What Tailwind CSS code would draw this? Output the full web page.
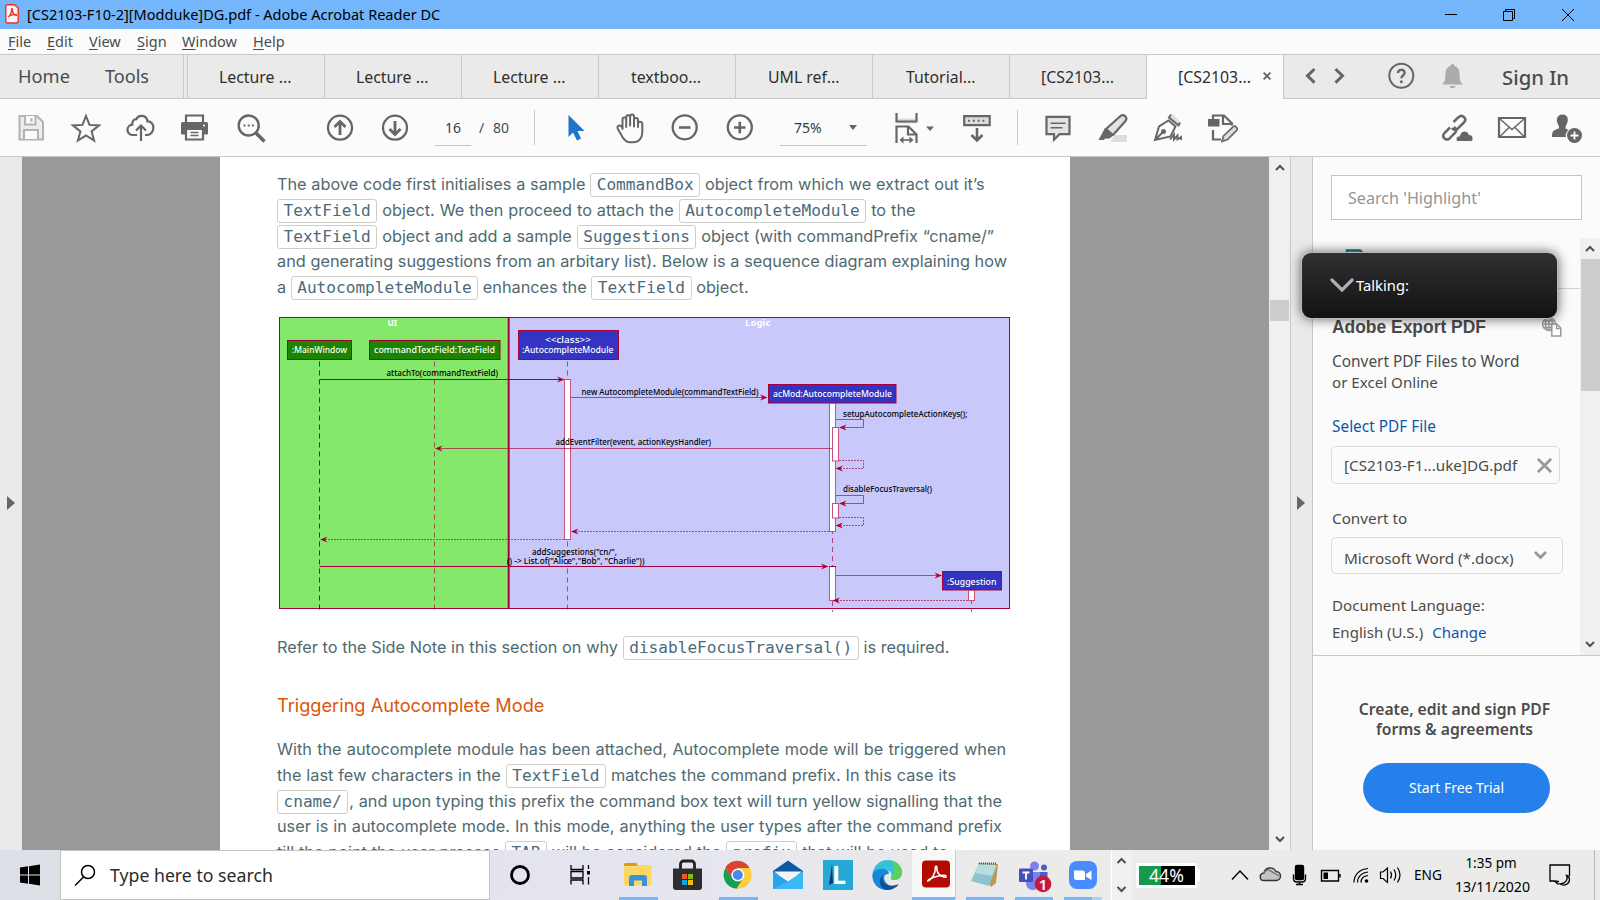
<!DOCTYPE html>
<html lang="en">
<head>
<meta charset="utf-8">
<title>[CS2103-F10-2][Modduke]DG.pdf - Adobe Acrobat Reader DC</title>
<script src="https://cdn.jsdelivr.net/npm/@tailwindcss/browser@4"></script>
</head>
<body class="w-[1600px] h-[900px] overflow-hidden flex flex-col bg-[#fbfbfb] font-['Noto_Sans','Open_Sans',sans-serif] text-[#4b4b4b] whitespace-nowrap">

<!-- Title bar -->
<header class="h-[29px] shrink-0 bg-[#73b6fc] flex items-center text-black">
  <svg class="ml-[5px] -mt-[2px] w-[14px] h-[20px]" viewBox="0 0 14 20"><path d="M2 .8h7.5L13.2 4v13a2 2 0 0 1-2 2H2.800a2 2 0 0 1-2-2V2A1.200 1.200 0 0 1 2 .8z" fill="#fff4f3" stroke="#e8322a" stroke-width="1.400"/><path d="M3 13c2-.8 3.800-4.500 3.600-7.500 0-1 1-1 .9 0C7.200 8.500 9 11 11 11.300c1 .2.800-.9-.3-.9-2.500 0-5 .7-6.900 1.700" fill="none" stroke="#e8322a" stroke-width="1.300"/></svg>
  <span class="ml-[8px] text-[14.540px] leading-[29px]">[CS2103-F10-2][Modduke]DG.pdf - Adobe Acrobat Reader DC</span>
  <svg class="ml-auto w-[12px] h-[12px]" viewBox="0 0 12 12"><path d="M0 5.500h12" stroke="#000"/></svg>
  <svg class="ml-[46px] w-[12px] h-[12px]" viewBox="0 0 12 12" fill="none" stroke="#000"><path d="M.5 2.500h9v9h-9zM2.500 2.500v-2h9v9h-2"/></svg>
  <svg class="ml-[47px] mr-[26px] w-[12px] h-[12px]" viewBox="0 0 12 12" stroke="#000"><path d="M0 0l12 12M12 0L0 12"/></svg>
</header>

<!-- Menu bar -->
<nav class="h-[25px] shrink-0 flex items-center text-[14.500px] leading-[25px] [&_u]:underline-offset-2 pl-[8px]">
  <span class="w-[39px]"><u>F</u>ile</span><span class="w-[42px]"><u>E</u>dit</span><span class="w-[48px]"><u>V</u>iew</span><span class="w-[45px]"><u>S</u>ign</span><span class="w-[71px]"><u>W</u>indow</span><span><u>H</u>elp</span>
</nav>

<!-- Tabs -->
<div class="h-[45px] shrink-0 flex bg-[#eaeaea] border-y border-[#c8c8c8] leading-[44px] text-[#2f2f2f] text-[15.850px]">
  <span class="w-[87px] pl-[18px] text-[18.300px] leading-[42px] text-[#4b4b4b]">Home</span>
  <span class="w-[97px] pl-[18px] text-[18.100px] leading-[42px] text-[#4b4b4b] border-r border-[#c8c8c8]">Tools</span>
  <span class="w-[4px] border-r border-[#c8c8c8]"></span>
  <span class="w-[137px] h-[43px] pl-[31px] border-r border-[#c8c8c8]">Lecture ...</span>
  <span class="w-[137px] h-[43px] pl-[31px] border-r border-[#c8c8c8]">Lecture ...</span>
  <span class="w-[137px] h-[43px] pl-[31px] border-r border-[#c8c8c8]">Lecture ...</span>
  <span class="w-[137px] h-[43px] pl-[32px] border-r border-[#c8c8c8]">textboo...</span>
  <span class="w-[137px] h-[43px] pl-[32px] border-r border-[#c8c8c8]">UML ref...</span>
  <span class="w-[137px] h-[43px] pl-[33px] border-r border-[#c8c8c8]">Tutorial...</span>
  <span class="w-[137px] h-[43px] pl-[31px] border-r border-[#c8c8c8]">[CS2103...</span>
  <span class="w-[137px] h-[44px] pl-[31px] border-r border-[#c8c8c8] bg-[#fbfbfb] flex items-center"><span class="w-[85px]">[CS2103...</span><svg class="-mt-[2px] w-[8px] h-[8px]" viewBox="0 0 9 9" stroke="#606060" stroke-width="2"><path d="M.7.7l7.600 7.600M8.300.7L.7 8.300"/></svg></span>
  <svg class="w-[218px] h-[43px]" viewBox="1284 55 218 43" fill="none">
    <g stroke="#666" stroke-width="3"><path d="M1314.500 69l-7 6.800 7 6.800M1335.500 69l7 6.800-7 6.800"/></g>
    <circle cx="1401.300" cy="75.800" r="12" stroke="#666" stroke-width="2"/>
    <path d="M1398 73c0-4.200 6.600-4.200 6.600-.2 0 2.500-3.200 2.600-3.200 5.400" stroke="#666" stroke-width="2.400"/><circle cx="1401.400" cy="81.800" r="1.500" fill="#666"/>
    <path d="M1452.500 64c1.600 0 2 1 2 2 3.500 1 5 4 5 8 0 6 .8 8 3.500 10.500h-21c2.700-2.500 3.500-4.500 3.500-10.500 0-4 1.500-7 5-8 0-1 .4-2 2-2zM1449.500 86h6c-.5 3-5.500 3-6 0z" fill="#ababab"/>
  </svg>
  <span class="h-[43px] text-[20.300px] font-medium text-[#4b4b4b]">Sign In</span>
</div>

<!-- Toolbar -->
<div class="h-[58px] shrink-0 flex items-center border-b border-[#c8c8c8] text-[14px] [&>svg]:h-[32px] [&>svg]:shrink-0">
  <svg class="ml-[15px] w-[32px]" viewBox="15 111 32 32" fill="none" stroke="#b3b3b3" stroke-width="2"><path d="M19.500 115h17.500l6 6v17.500h-23.500z" fill="#ececec"/><path d="M25 115v8.500h10.500V115M31.500 117v4M24 138v-9h14v9" fill="#fbfbfb"/></svg>
  <svg class="ml-[23px] w-[32px]" viewBox="70 111 32 32" fill="none" stroke="#666" stroke-width="2"><path d="M86 115l3.500 8.900 9.600.5-7.500 6 2.500 9.200-8.100-5.200-8.100 5.200 2.500-9.200-7.500-6 9.600-.5z"/></svg>
  <svg class="ml-[23px] w-[32px]" viewBox="125 111 32 32" fill="none" stroke="#666" stroke-width="2.200"><path d="M137 134h-4a5.200 5.200 0 0 1-.7-10.400c-.3-4 1.800-5.500 4-5.400 2.200-5 10.500-4.500 11.200 2.200 3-.5 6 2.500 5.900 6.300-.1 4-2.800 7.300-6.400 7.300h-2M141 140v-15M136 129.500l5-5 5 5"/></svg>
  <svg class="ml-[22px] w-[32px]" viewBox="179 111 32 32"><path d="M186 121v-6.500h17v6.500" fill="#fbfbfb" stroke="#666" stroke-width="2.200"/><path d="M182.500 121h24a1.500 1.500 0 0 1 1.500 1.500v10a1 1 0 0 1-1 1h-25a1 1 0 0 1-1-1v-10a1.500 1.500 0 0 1 1.500-1.500z" fill="#666"/><path d="M186 128v10.500h17V128z" fill="#fbfbfb" stroke="#666" stroke-width="2.200"/><path d="M190.500 131.500h8M190.500 134.500h8" stroke="#666" stroke-width="1.300"/><circle cx="204" cy="124.500" r="1" fill="#fff"/></svg>
  <svg class="ml-[24px] w-[32px]" viewBox="235 111 32 32" fill="none" stroke="#666" stroke-width="2.400"><circle cx="248.700" cy="124.500" r="10"/><path d="M256 132l8.500 8.500" stroke-width="3.500"/><path d="M243.500 124.500h2m2.200 0h2m2.200 0h2" stroke-width="2"/></svg>
  <svg class="ml-[57px] w-[32px]" viewBox="324 111 32 32" fill="none" stroke="#666" stroke-width="2.300"><circle cx="340" cy="126.700" r="12"/><path d="M340 134v-13M334.500 126l5.500-5.500 5.500 5.500" stroke-width="2.800"/></svg>
  <svg class="ml-[23px] w-[32px]" viewBox="379 111 32 32" fill="none" stroke="#666" stroke-width="2.300"><circle cx="395" cy="126.700" r="12"/><path d="M395 120v13M389.500 128l5.500 5.500 5.500-5.500" stroke-width="2.800"/></svg>
  <span class="ml-[24px] mt-[1px] w-[36px] h-[35px] border-b border-[#c4c4c4] pl-[10px] leading-[34px] text-[#3c3c3c]">16</span>
  <span class="ml-[8px] w-[14px]">/</span><span class="w-[41px]">80</span>
  <span class="w-px h-[35px] bg-[#c8c8c8]"></span>
  <svg class="ml-[25px] w-[32px]" viewBox="560 111 32 32"><path d="M568.500 114v22l4.500-4.500 4 8 4-2-3.500-7.500h7z" fill="#1f74cc"/></svg>
  <svg class="ml-[22px] w-[32px]" viewBox="614 111 32 32" fill="none" stroke="#666" stroke-width="2" stroke-linejoin="round"><path d="M622.500 128v-9.500c0-2.700 3.700-2.700 3.700 0v7.500-9.500c0-3 3.900-3 3.900 0v8-9c0-2.800 3.900-2.800 3.900 0v10-6.500c0-2.700 4-2.700 4 0v7-3.200c0-2.700 4-2.700 4.300 0v9c0 5-3.500 9.500-9 9.500h-3c-4 0-6-2-8-5.500l-4.500-8c-1.500-3 2.200-4.500 4-2z"/></svg>
  <svg class="ml-[23px] w-[32px]" viewBox="669 111 32 32" fill="none" stroke="#666" stroke-width="2.300"><circle cx="684.700" cy="126.300" r="12"/><path d="M679 126.500h11.500" stroke-width="2.600"/></svg>
  <svg class="ml-[23px] w-[32px]" viewBox="724 111 32 32" fill="none" stroke="#666" stroke-width="2.300"><circle cx="739.800" cy="126.300" r="12"/><path d="M734 126.500h11.500M739.800 120.800v11.500" stroke-width="2.600"/></svg>
  <span class="ml-[24px] mt-[1px] w-[87px] h-[35px] border-b border-[#c4c4c4] pl-[14px] leading-[34px] flex items-center text-[#3c3c3c]"><span class="w-[55px]">75%</span><svg class="w-[8px] h-[5px]" viewBox="0 0 8 5"><path d="M0 0h8L4 5z" fill="#666"/></svg></span>
  <svg class="ml-[23px] w-[46px]" viewBox="890 111 46 32" fill="none" stroke="#666" stroke-width="2.200"><path d="M897 117.500h19v5h-19z" fill="#ddd" stroke="none"/><path d="M896.500 120.500v-8.500M916.500 120.500v-8.500M895.500 120.500h22M896.500 142v-16.500h12l8 8v8.500M908 125v8.500h8.500"/><path d="M901 139h10" stroke-width="1.600"/><path d="M903.500 135.500l-4 3.500 4 3.500zM909.500 135.500l4 3.500-4 3.500z" fill="#666" stroke="none"/><path d="M926 125.500h8l-4 4.500z" fill="#666" stroke="none"/></svg>
  <svg class="ml-[25px] w-[32px]" viewBox="961 111 32 32" fill="none" stroke="#666" stroke-width="2.200"><path d="M964.200 115.200h25.500v9h-25.500z" fill="#ddd"/><path d="M968 119.800h2m2.800 0h2m2.800 0h2m2.800 0h2" stroke-width="2"/><path d="M977 127v12M971.500 134l5.500 5.500 5.500-5.500" stroke-width="2.600"/></svg>
  <span class="ml-[24px] w-px h-[35px] bg-[#c8c8c8]"></span>
  <svg class="ml-[24px] w-[32px]" viewBox="1042 111 32 32" fill="none" stroke="#666" stroke-width="2.200"><path d="M1046.500 115.800h23v17.400h-10l-5.500 5.500v-5.500h-7.500z" fill="#e4e4e4"/><path d="M1050.500 122.200h15M1050.500 126.800h12" stroke-width="1.500"/></svg>
  <svg class="ml-[23px] w-[32px]" viewBox="1097 111 32 32" fill="none" stroke="#666" stroke-width="2.200"><path d="M1110 141l5-7h12v7z" fill="#ddd" stroke="none"/><path d="M1106 128l14.500-13c3.500-2.500 7.500 1.500 5 5l-12.500 14z" fill="#e2e2e2"/><path d="M1105 127l8 7.500-3.500 3h-4l-2 1.500h-5z" fill="#666" stroke="none"/></svg>
  <svg class="ml-[23px] w-[32px]" viewBox="1152 111 32 32" fill="none" stroke="#666" stroke-width="2"><path d="M1169 117l4-4 7 8-4 3z" fill="#ddd" stroke="none"/><path d="M1171 113.500l-2 3 9.500 8 1.500-3M1155 139l4-13.500 9.500-6 7 6-5 10zM1155 139l7.500-7.500"/><circle cx="1163.500" cy="130.500" r="1.500" fill="#666"/><path d="M1170 138.500l4-5v5l3.500-4v4l3.500-2.500v3" stroke-width="1.900"/></svg>
  <svg class="ml-[23px] w-[32px]" viewBox="1207 111 32 32" fill="none" stroke="#666" stroke-width="2.200"><path d="M1213 118v-3.500h11l8 8v2M1223 115v8h8M1213 129v9.500h8"/><path d="M1208 118h11.500v7.500H1208z" fill="#666" stroke="none"/><path d="M1223.500 135l10-9.500c2-1 4.500 1.500 3.500 3.500l-9.500 9.500-5.500 2z" fill="#ddd" stroke-width="1.700"/></svg>
  <svg class="ml-auto w-[32px]" viewBox="1441 111 32 32" fill="none" stroke="#666" stroke-width="2.500"><path d="M1450 126.500l-5.500 5.500c-3.500 4 1.500 8.500 5.300 5.200l5.200-5.200c2.200-2.500 1-5-1-6"/><path d="M1453.500 121l5-4.800c4-3.500 9 1.500 5.500 5.200l-6 6c-2.500 2-4.800 1.500-6-.5"/><path d="M1458 140.500c-3-.5-2.500-5.500 1.500-5.500 1-6 8-6.500 9.500-1.500 4.500-.2 5.500 6.500 1.500 7z" fill="#666" stroke="#fbfbfb" stroke-width="1"/></svg>
  <svg class="ml-[23px] w-[32px]" viewBox="1496 111 32 32" fill="none" stroke="#666"><path d="M1499 117h26v19h-26z" stroke-width="2.200"/><path d="M1500 118l12 10.500L1524 118M1500 135.500l9-9M1524 135.500l-9-9" stroke-width="1.500"/></svg>
  <svg class="ml-[23px] mr-[17px] w-[32px]" viewBox="1551 111 32 32"><path d="M1562.500 113.500c6.500 0 6.500 7 3 12v2l3 1.500c-3 3-3 5-2.500 7h-14c0-5 1-6.500 4-7.500l3-1.200v-2c-3.500-5-3-11.800 3.500-11.800z" fill="#666"/><circle cx="1574.500" cy="134.500" r="7.500" fill="#666"/><path d="M1570.500 134.500h8M1574.500 130.500v8" stroke="#fff" stroke-width="1.800"/></svg>
</div>

<!-- Workspace -->
<main class="h-[693px] shrink-0 flex overflow-hidden">
  <aside class="w-[22px] bg-[#eaeaea] flex items-center pb-[2px] pl-[7px]"><svg class="w-[8px] h-[14px]" viewBox="0 0 8 14"><path d="M0 0l8 7-8 7z" fill="#666"/></svg></aside>

  <section class="w-[1247px] bg-[#999] pl-[198px] overflow-hidden">
    <article class="w-[850px] h-[693px] overflow-hidden bg-white pt-[14px] pl-[57px] font-['Inter',sans-serif] text-[16.280px] leading-[26px] text-[#50696f] [&_p]:[text-align-last:justify] [&_p]:h-[26px] [&_code]:font-['DejaVu_Sans_Mono',monospace] [&_code]:text-[16.120px] [&_code]:leading-none [&_code]:border [&_code]:border-[#cfcfc9] [&_code]:rounded-[3px] [&_code]:px-[5.500px] [&_code]:pt-[1px] [&_code]:pb-[2px] [&_code]:text-[#4c6a7a]">
      <p class="w-[707.500px]">The above code first initialises a sample <code>CommandBox</code> object from which we extract out it’s</p>
      <p class="w-[638.500px]"><code>TextField</code> object. We then proceed to attach the <code>AutocompleteModule</code> to the</p>
      <div class="h-[25px]"><p class="w-[717px]"><code>TextField</code> object and add a sample <code>Suggestions</code> object (with commandPrefix “cname/”</p></div>
      <p class="w-[730px]">and generating suggestions from an arbitary list). Below is a sequence diagram explaining how</p>
      <p class="w-[471.500px]">a <code>AutocompleteModule</code> enhances the <code>TextField</code> object.</p>

      <svg class="mt-[15px] w-[736px] h-[298px]" viewBox="277 315 736 298" font-family="Noto Sans, Open Sans, sans-serif" font-size="8.600" font-weight="500" fill="none" stroke="#a80036">
        <rect x="279.500" y="317.500" width="229.500" height="291" fill="#84e86b"/>
        <rect x="509" y="317.500" width="500.500" height="291" fill="#c8c8fa"/>
        <path d="M508.500 317v292" stroke-width="1.600"/>
        <g stroke-dasharray="5 4"><path d="M319.500 361.500v251"/><path d="M434.500 361.500v251M567.500 361.500v251M832.500 403v209M971.500 590v22" opacity=".65"/></g>
        <g fill="#1c8400"><rect x="287.500" y="340.500" width="64" height="19"/><rect x="369.500" y="340.500" width="130.500" height="19"/></g>
        <g fill="#3333c4"><rect x="518.500" y="330.500" width="100" height="29"/><rect x="768.500" y="384.500" width="127.500" height="18.500"/><rect x="942.500" y="571.500" width="59" height="18.500"/></g>
        <g fill="#fff" stroke="#c8527c" stroke-width="1"><rect x="564.500" y="379.500" width="6" height="160"/><rect x="829.500" y="403.500" width="6" height="128"/><rect x="832.500" y="427.500" width="6" height="33.500"/><rect x="832.500" y="503.500" width="6" height="14.500"/><rect x="829.500" y="566.500" width="6" height="34"/><rect x="968.500" y="590.500" width="6" height="10"/></g>
        <path d="M319.500 379.500H562M319.500 566.500H826M829 566.500h7"/>
        <path opacity=".65" d="M571 397.500H766M832 448.500H438M836 419.500H863.500V427.500H841M836 495.500H863.500V503.500H841M836 575.500H940"/>
        <path opacity=".65" stroke-dasharray="2 1" d="M839 460.500H863.500V468.500H838M839 517.500H863.500V525.500H838M829 531.500H573M564 539.500H322M968 600.500H835"/>
        <g fill="#a80036" stroke="none">
          <path d="M564.500 379.500l-7.500-3 2.500 3-2.500 3zM767.500 397.500l-7.500-3 2.500 3-2.500 3zM828.500 566.500l-7.500-3 2.500 3-2.500 3zM942 575.500l-7.500-3 2.500 3-2.500 3z"/>
          <path d="M435 448.500l7.500-3-2.500 3 2.500 3zM839 427.500l7.500-3-2.500 3 2.500 3zM839 503.500l7.500-3-2.500 3 2.500 3zM835.500 468.500l7.500-3-2.500 3 2.500 3zM835.500 525.500l7.500-3-2.500 3 2.500 3zM571 531.500l7.500-3-2.500 3 2.500 3zM320 539.500l7.500-3-2.500 3 2.500 3zM832.500 600.500l7.500-3-2.500 3 2.500 3z"/>
        </g>
        <g fill="#fff" stroke="none">
          <text x="387.500" y="325.800" textLength="9.500" font-weight="700" lengthAdjust="spacingAndGlyphs">UI</text>
          <text x="745" y="325.800" textLength="25.500" font-weight="700" lengthAdjust="spacingAndGlyphs">Logic</text>
          <text x="292" y="353" textLength="55" lengthAdjust="spacingAndGlyphs">:MainWindow</text>
          <text x="374" y="353" textLength="121" lengthAdjust="spacingAndGlyphs">commandTextField:TextField</text>
          <text x="545" y="343" textLength="46" lengthAdjust="spacingAndGlyphs">&lt;&lt;class&gt;&gt;</text>
          <text x="522" y="353" textLength="91.500" lengthAdjust="spacingAndGlyphs">:AutocompleteModule</text>
          <text x="773" y="397" textLength="119" lengthAdjust="spacingAndGlyphs">acMod:AutocompleteModule</text>
          <text x="947" y="584.700" textLength="49.500" lengthAdjust="spacingAndGlyphs">:Suggestion</text>
        </g>
        <g fill="#000" stroke="none" font-size="8.300">
          <text x="386.500" y="376.300" textLength="111.500" lengthAdjust="spacingAndGlyphs">attachTo(commandTextField)</text>
          <text x="581.500" y="394.800" textLength="177" lengthAdjust="spacingAndGlyphs">new AutocompleteModule(commandTextField)</text>
          <text x="843" y="416.800" textLength="124.500" lengthAdjust="spacingAndGlyphs">setupAutocompleteActionKeys();</text>
          <text x="555.500" y="445.300" textLength="155.500" lengthAdjust="spacingAndGlyphs">addEventFilter(event, actionKeysHandler)</text>
          <text x="843" y="492" textLength="89" lengthAdjust="spacingAndGlyphs">disableFocusTraversal()</text>
          <text x="532" y="554.700" textLength="85" lengthAdjust="spacingAndGlyphs">addSuggestions("cn/",</text>
          <text x="507" y="563.800" textLength="137.500" lengthAdjust="spacingAndGlyphs">() -&gt; List.of("Alice","Bob", "Charlie"))</text>
        </g>
      </svg>

      <p class="mt-[21px] w-[672.500px]">Refer to the Side Note in this section on why <code>disableFocusTraversal()</code> is required.</p>
      <h2 class="mt-[32px] text-[18.180px] leading-[26px] text-[#d9580d]">Triggering Autocomplete Mode</h2>
      <p class="mt-[18px] w-[729px]">With the autocomplete module has been attached, Autocomplete mode will be triggered when</p>
      <p class="w-[679px]">the last few characters in the <code>TextField</code> matches the command prefix. In this case its</p>
      <div class="h-[25px]"><p class="w-[725px]"><code>cname/</code><span class="ml-[1px]">,</span> and upon typing this prefix the command box text will turn yellow signalling that the</p></div>
      <p class="w-[725px]">user is in autocomplete mode. In this mode, anything the user types after the command prefix</p>
      <p class="w-[671px]">till the point the user presses <code>TAB</code> will be considered the <code>prefix</code> that will be used to</p>
    </article>
  </section>

  <!-- Document scrollbar -->
  <div class="w-[21px] bg-[#f0f0f0] flex flex-col items-center">
    <svg class="mt-[7px] w-[10px] h-[7px]" viewBox="0 0 10 7" fill="none" stroke="#505050" stroke-width="2"><path d="M1 6l4-4 4 4"/></svg>
    <span class="mt-[129px] w-[19px] h-[21px] bg-[#cdcdcd]"></span>
    <svg class="mt-auto mb-[7px] w-[10px] h-[7px]" viewBox="0 0 10 7" fill="none" stroke="#505050" stroke-width="2"><path d="M1 1l4 4 4-4"/></svg>
  </div>
  <div class="w-[23px] bg-[#eaeaea] border-x border-[#c8c8c8] flex items-center pb-[2px] pl-[6px]"><svg class="w-[8px] h-[14px]" viewBox="0 0 8 14"><path d="M0 0l8 7-8 7z" fill="#666"/></svg></div>

  <!-- Tools pane -->
  <aside class="relative w-[287px] bg-[#fbfbfb] flex flex-col text-[15.250px] leading-[20px]">
    <div class="ml-[18px] mt-[18px] w-[251px] h-[45px] bg-white border border-[#c4c4c4] pl-[16px] leading-[44px] text-[16.150px] text-[#959595]">Search 'Highlight'</div>
    <div class="mt-[18px] h-[418px] flex border-b border-[#c8c8c8]">
      <div class="w-[267px]">
        <div class="h-[51px] border-b border-[#d0d0d0] pt-[11px] pl-[32px]"><svg class="w-[22px] h-[26px]" viewBox="0 0 22 26" fill="none" stroke="#12807c" stroke-width="2.400"><path d="M2 25V1.500h13l6 6"/></svg></div>
        <div class="pl-[19px]">
          <div class="mt-[28px] flex"><h3 class="w-[209px] font-['Liberation_Sans',sans-serif] font-bold text-[17.430px]">Adobe Export PDF</h3>
            <svg class="w-[21px] h-[20px]" viewBox="0 0 21 20" fill="none" stroke="#999" stroke-width="1.300"><circle cx="8" cy="7" r="6.500"/><path d="M1 7h14M8 .5v13M2 4h12M2 10.500h12"/><ellipse cx="8" cy="7" rx="3.500" ry="6.500"/><path d="M10.800 7h5l4 4v8h-9z" fill="#fff" stroke-width="1.500"/><path d="M15.500 7.500v4h4"/></svg></div>
          <p class="mt-[14px] text-[15.420px] leading-[21px]">Convert PDF Files to Word<br><span class="text-[15.140px]">or Excel Online</span></p>
          <p class="mt-[24px] text-[15.400px] text-[#0d56a6]">Select PDF File</p>
          <div class="mt-[9px] -ml-px w-[229px] h-[38px] border border-[#dcdcdc] rounded-[5px] flex items-center pl-[12px]"><span class="w-[193px]">[CS2103-F1...uke]DG.pdf</span><svg class="w-[15px] h-[15px]" viewBox="0 0 14 14" stroke="#999" stroke-width="2.600"><path d="M.8.8l12.400 12.400M13.200.8L.8 13.200"/></svg></div>
          <p class="mt-[24px]">Convert to</p>
          <div class="mt-[9px] -ml-px w-[232px] h-[37px] border border-[#dcdcdc] rounded-[5px] flex items-center pl-[12px]"><span class="w-[190px] pt-[4px]">Microsoft Word (*.docx)</span><svg class="w-[13px] h-[9px]" viewBox="0 0 13 9" fill="none" stroke="#999" stroke-width="2.800"><path d="M1 1l5.500 5.500L12 1"/></svg></div>
          <p class="mt-[21px] text-[15.100px]">Document Language:</p>
          <p class="mt-[7px] text-[15.060px]">English (U.S.)<span class="ml-[9px] text-[#0d56a6]">Change</span></p>
        </div>
      </div>
      <div class="w-[20px] bg-[#f0f0f0] flex flex-col items-center">
        <svg class="mt-[7px] w-[10px] h-[7px]" viewBox="0 0 10 7" fill="none" stroke="#505050" stroke-width="2"><path d="M1 6l4-4 4 4"/></svg>
        <span class="mt-[7px] w-[19px] h-[132px] bg-[#cdcdcd]"></span>
        <svg class="mt-auto mb-[7px] w-[10px] h-[7px]" viewBox="0 0 10 7" fill="none" stroke="#505050" stroke-width="2"><path d="M1 1l4 4 4-4"/></svg>
      </div>
    </div>
    <p class="mt-[43px] pr-[4px] text-center font-semibold text-[15.700px]">Create, edit and sign PDF<br>forms &amp; agreements</p>
    <div class="ml-[50px] mt-[24px] w-[187px] h-[50px] rounded-full bg-[#2680eb] text-white text-center leading-[49px] text-[13.970px]">Start Free Trial</div>

    <!-- Floating "Talking" overlay -->
    <div class="absolute left-[-12px] top-[95px] w-[257px] h-[67px] rounded-[10px] border border-[#ddd]/80 bg-linear-to-b from-[#303032] to-[#131314] shadow-[0_0_12px_rgba(0,0,0,0.6)] flex items-center pb-[2px] pl-[28px] text-white text-[14.770px]">
      <svg class="w-[24px] h-[14px]" viewBox="0 0 24 14" fill="none" stroke="#b0b0b0" stroke-width="3.200" stroke-linecap="round"><path d="M2 2l10 10L22 2"/></svg><span class="ml-[2px]">Talking:</span>
    </div>
  </aside>
</main>

<!-- Taskbar -->
<footer class="h-[50px] shrink-0 flex items-center bg-linear-to-r from-[#dce0e6] via-[#e5e5ef] via-40% to-[#ebebea] to-65% text-black [&_svg]:shrink-0">
  <svg class="w-[60px] h-[50px]" viewBox="0 850 60 50"><path d="M20 867.500l8-1.200v8.200h-8zM29 866.200l11-1.600v9.900H29zM20 875.500h8v8.200l-8-1.200zM29 875.500h11v9.900l-11-1.600z"/></svg>
  <div class="w-[430px] h-[50px] bg-white border border-[#c4c4c4] flex items-center pl-[13px] text-[17.700px] text-[#2b2b2b]"><svg class="w-[22px] h-[22px]" viewBox="0 0 22 22" fill="none" stroke="#000" stroke-width="1.500"><circle cx="14" cy="8" r="6.500"/><path d="M9.500 13L1 21.500"/></svg><span class="ml-[14px]">Type here to search</span></div>
  <svg class="w-[129px] h-[50px]" viewBox="490 850 129 50" fill="none" stroke="#000"><circle cx="520" cy="875" r="8.500" stroke-width="2.800"/><path d="M571 865v4.500h12V865M571 884.500V880h12v4.500M571 871.500h12v6.500h-12zM588.500 865v4M588.500 877v7.500" stroke-width="1.300"/><path d="M587 871h3v3.500h-3z" fill="#000" stroke="none"/></svg>
  <!-- Explorer -->
  <svg class="w-[39px] h-[50px]" viewBox="619 850 39 50"><path d="M624 864.500a1.500 1.500 0 0 1 1.500-1.500h11l1.500 3h-14z" fill="#dd9c00"/><path d="M624 866.500h13l2-1.500h11a1.500 1.500 0 0 1 1.500 1.500V884a1.500 1.500 0 0 1-1.500 1.500h-24.500a1.500 1.500 0 0 1-1.500-1.500z" fill="#ffd864"/><path d="M629 886v-8a3 3 0 0 1 3-3h12a3 3 0 0 1 3 3v8h-5v-5.500h-8v5.500z" fill="#3a92dc"/><path d="M619 897h39v3h-39z" fill="#75b8fb"/></svg>
  <!-- Store -->
  <svg class="ml-[15px] w-[30px] h-[50px]" viewBox="673 850 30 50"><path d="M680.500 869v-5a3 3 0 0 1 3-3h8a3 3 0 0 1 3 3v5" fill="none" stroke="#222" stroke-width="2.800"/><path d="M673 868.500h29V887a3 3 0 0 1-3 3h-23a3 3 0 0 1-3-3z" fill="#2e2e2e"/><path d="M682 874h5v5h-5z" fill="#f35325"/><path d="M688 874h5v5h-5z" fill="#81bc06"/><path d="M682 880h5v5h-5z" fill="#05a6f0"/><path d="M688 880h5v5h-5z" fill="#ffba08"/></svg>
  <!-- Chrome -->
  <svg class="ml-[16px] w-[39px] h-[50px]" viewBox="719 850 39 50"><circle cx="737.800" cy="875" r="13.800" fill="#ffcd40"/><path d="M737.500 868h12a13.800 13.800 0 0 0-24-.5l6 11z" fill="#da4437"/><path d="M725.500 868a13.800 13.800 0 0 0 11 20.800l6.500-10.500-11 0z" fill="#159e58"/><circle cx="737.800" cy="875" r="6.500" fill="#fff"/><circle cx="737.800" cy="875" r="5" fill="#4a86f0"/><path d="M719 897h39v3h-39z" fill="#75b8fb"/></svg>
  <!-- Mail -->
  <svg class="ml-[15px] w-[30px] h-[50px]" viewBox="773 850 30 50"><path d="M773 871l15-10.500 15 10.500v4h-30z" fill="#0c59a4"/><path d="M774 871.500h28L788 883z" fill="#f5f5f5"/><path d="M773 871.500l15 10 15-10V889h-30z" fill="#27a5ea"/><path d="M773 889l17-8.500 13-9V889z" fill="#3bb8f5"/></svg>
  <!-- L -->
  <div class="ml-[20px] w-[30px] h-[30px] bg-[#25aad8] grid"><svg class="col-start-1 row-start-1 w-[30px] h-[30px]" viewBox="0 0 30 30"><path d="M9 4L6 25l4-2z" fill="#123a66"/></svg><span class="col-start-1 row-start-1 pl-[9px] text-white font-bold text-[25px] leading-[28px]">L</span></div>
  <!-- Edge -->
  <svg class="ml-[19px] w-[30px] h-[50px]" viewBox="872 850 30 50"><path d="M872.500 874c1-8 7-14 15-14 9 0 14.500 6 14.500 12.500 0 5-4 7.500-8 7.500-3 0-4-1.500-3-3 2-4-1.500-7-6-7-6 0-10.500 2-12.500 4z" fill="#35c1d8"/><path d="M891 860.500c7 1.500 11 6.500 11 12 0 5-4 7.500-8 7.500-3 0-4-1.500-3-3 5-4 4-12 0-16.500z" fill="#5bd15c"/><path d="M872.300 875c.5-4 6-7.500 12-6 4 1 5 3.500 4.500 5-7-1-6 9 2 12l-4 4c-8 0-14.500-6-14.500-15z" fill="#1788d8"/><path d="M883 875c-2 7 4 14 16 9-3 4-7 6-12 6-8-1-9-11-4-15z" fill="#0c4f92"/></svg>
  <!-- Acrobat -->
  <div class="ml-[10px] w-[44px] h-[50px] bg-[#f8f8f8] border-r border-[#ccc]"><svg class="w-[43px] h-[50px]" viewBox="912 850 43 50"><rect x="922" y="860.500" width="28" height="27" rx="4" fill="#b30b00"/><path d="M928 881c3.500-1 8-8.500 7.300-13.500-.2-1.800 1.900-1.800 1.600 0-.8 5 4 10 8.100 9.800 1.700-.2 1.500-1.900-.5-2-5 0-10 1.500-14.500 3.700-2 1-2.800 2.100-2 2z" fill="none" stroke="#fff" stroke-width="1.500"/><path d="M912 897h43v3h-43z" fill="#75b8fb"/></svg></div>
  <!-- Notepad -->
  <svg class="ml-[10px] w-[38px] h-[50px]" viewBox="966 850 38 50"><path d="M978 863l20 1-2 19-5 4z" fill="#b89a5c"/><path d="M979 864l17.500 1-7.500 21-18-5z" fill="#8cc3cf"/><path d="M979 864l17.500 1-4 11-17-3z" fill="#b7dde2"/><path d="M979 863.500h18" stroke="#555" stroke-width="2" stroke-dasharray="1 1"/><path d="M966 897h38v3h-38z" fill="#75b8fb"/></svg>
  <!-- Teams -->
  <svg class="ml-[11px] w-[38px] h-[50px]" viewBox="1015 850 38 50"><circle cx="1034.500" cy="866" r="4.500" fill="#7b83eb"/><circle cx="1044" cy="867.500" r="3" fill="#5059c9"/><path d="M1038 872h9.500v8a5 5 0 0 1-9.500 2z" fill="#5059c9"/><path d="M1026 872h14v10a7 7 0 0 1-14 2z" fill="#7b83eb"/><rect x="1019" y="868.500" width="14" height="13.500" rx="1" fill="#464eb8"/><path d="M1022.500 872.500h7M1026 872.500v7" stroke="#fff" stroke-width="1.800"/><circle cx="1043" cy="884" r="8.300" fill="#c4183c"/><text x="1038.800" y="889.500" font-size="15" font-weight="600" fill="#fff">1</text><path d="M1015 897h38v3h-38z" fill="#75b8fb"/></svg>
  <!-- Zoom -->
  <svg class="ml-[11px] w-[38px] h-[50px]" viewBox="1064 850 38 50"><rect x="1069" y="861" width="28" height="28" rx="8" fill="#4a8cff"/><path d="M1074 870.500h8.500a2.500 2.500 0 0 1 2.500 2.500v7h-8.500a2.500 2.500 0 0 1-2.500-2.500zM1086 874l5.500-3.500v9.500l-5.500-3.500z" fill="#fff"/><path d="M1064 897h28v3h-28z" fill="#75b8fb"/><path d="M1092 897h10v3h-10z" fill="#a9d3fc"/></svg>
  <div class="ml-[9px] w-[21px] h-[50px] bg-[#f0f0f0] border-l border-white"><svg class="w-[20px] h-[50px]" viewBox="1112 850 20 50" fill="none" stroke="#505050" stroke-width="2"><path d="M1117.500 863l4-4 4 4M1117.500 887l4 4 4-4"/></svg></div>
  <!-- Battery meter -->
  <div class="ml-[4px] w-[61px] h-[25px] border-[3px] border-r-[2px] border-white flex bg-linear-to-r from-[#16994b] from-[22px] to-black to-[22px] text-white text-[17.700px] leading-[18px] pl-[10px]">44%</div>
  <span class="w-[3px] h-[12px] bg-white"></span>
  <!-- Tray -->
  <svg class="ml-[28px] w-[182px] h-[50px]" viewBox="1228 850 182 50" fill="none" stroke="#000" stroke-width="1.400">
    <path d="M1232 879.500l8-8.500 8 8.500"/>
    <path d="M1264 880.500c-5 0-5-7 0-7.500 1-6 9-7 12-1.500 6 0 6 9 0 9z" fill="#c4c4c4" stroke="#333"/><path d="M1263 873l5-3.500 11 6.500" stroke="#777"/>
    <rect x="1295.500" y="865.500" width="8" height="14" rx="1.500" fill="#000"/><path d="M1293.500 874.500v4q0 3.500 3.500 3.500h5q3.500 0 3.500-3.500v-4M1299.500 882v3M1296 884.500h7"/>
    <path d="M1321.500 870.500h17v10.500h-17zM1340 874v3.500"/><path d="M1323.500 872.500h4.500v6.500h-4.500z" fill="#000" stroke="none"/>
    <path d="M1354 882.500c0-8 6-13.500 14-14M1357.500 882.500c0-6 4.500-10 10.500-10.500M1361 882.500c0-4 3-6.500 7-7" stroke-width="1.200"/><circle cx="1366.500" cy="881" r="1.800" fill="#000" stroke="none"/>
    <path d="M1380.500 872v6.500h2.500l4.500 4v-14.500l-4.500 4zM1390.500 871.500q2 3.500 0 7M1394 869.500q3.500 5.500 0 11M1397.500 867.500q5 7.500 0 15" stroke-width="1.200"/>
  </svg>
  <span class="ml-[4px] w-[41px] text-[13.700px]">ENG</span>
  <div class="-mt-px w-[75px] text-center text-[14.100px] leading-[23px]"><div class="-ml-[3px] text-[13.500px]">1:35 pm</div><div>13/11/2020</div></div>
  <svg class="ml-[19px] w-[22px] h-[22px]" viewBox="0 0 22 22" fill="none" stroke="#000" stroke-width="1.300"><path d="M10 17.500H9l-3.500-.5H1V1h19.500v11M5.500 17l4 3.500"/><path d="M17.500 11.500c2 4-1 8-6.500 8.500 4.500 2.500 9.500 0 9.500-4.500 0-2-1-3.500-3-4z"/></svg>
  <span class="ml-auto mr-[5px] w-px h-[50px] bg-[#b8b8b8]"></span>
</footer>
</body>
</html>
